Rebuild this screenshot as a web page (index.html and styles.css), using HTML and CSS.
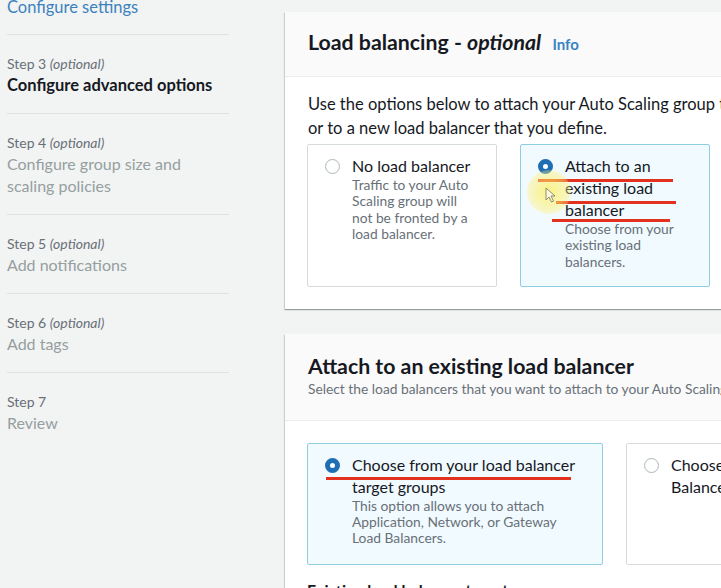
FILE: index.html
```html
<!DOCTYPE html>
<html lang="en">
<head>
<meta charset="utf-8">
<title>Load balancing</title>
<link rel="stylesheet" href="styles.css">
</head>
<body>
<div class="page">
  <nav class="steps">
    <div class="step step-first"><a class="step-link" href="#">Configure settings</a></div>
    <div class="step">
      <div class="step-label">Step 3 <i>(optional)</i></div>
      <div class="step-title is-current">Configure advanced options</div>
    </div>
    <div class="step">
      <div class="step-label">Step 4 <i>(optional)</i></div>
      <div class="step-title">Configure group size and scaling policies</div>
    </div>
    <div class="step">
      <div class="step-label">Step 5 <i>(optional)</i></div>
      <div class="step-title">Add notifications</div>
    </div>
    <div class="step">
      <div class="step-label">Step 6 <i>(optional)</i></div>
      <div class="step-title">Add tags</div>
    </div>
    <div class="step step-last">
      <div class="step-label">Step 7</div>
      <div class="step-title">Review</div>
    </div>
  </nav>

  <main class="content">
    <section class="panel">
      <header class="panel-head">
        <h2 class="panel-title">Load balancing - <i>optional</i> <a class="info" href="#">Info</a></h2>
      </header>
      <div class="panel-body">
        <p class="intro">Use the options below to attach your Auto Scaling group to an existing load balancer,<br>or to a new load balancer that you define.</p>
        <div class="tiles tiles-small">
          <div class="tile">
            <span class="radio"></span>
            <div class="tile-text">
              <div class="tile-title">No load balancer</div>
              <div class="tile-desc">Traffic to your Auto Scaling group will not be fronted by a load balancer.</div>
            </div>
          </div>
          <div class="tile is-selected">
            <span class="radio"></span>
            <div class="tile-text">
              <div class="tile-title">Attach to an existing load balancer</div>
              <div class="tile-desc">Choose from your existing load balancers.</div>
            </div>
            <span class="mark mark-a1"></span>
            <span class="mark mark-a2"></span>
            <span class="mark mark-a3"></span>
            <span class="glow"></span>
            <svg class="cursor" width="11" height="16" viewBox="0 0 11 16"><path d="M1 1 L1 13 L4 10 L6.5 15 L8.5 14 L6 9 L10 9 Z" fill="#fffbe0" stroke="#8a8a70" stroke-width="1" stroke-linejoin="round"/></svg>
          </div>
        </div>
      </div>
    </section>

    <section class="panel">
      <header class="panel-head panel-head-tall">
        <h2 class="panel-title">Attach to an existing load balancer</h2>
        <p class="panel-sub">Select the load balancers that you want to attach to your Auto Scaling group.</p>
      </header>
      <div class="panel-body panel-body-2">
        <div class="tiles tiles-wide">
          <div class="tile is-selected">
            <span class="radio"></span>
            <div class="tile-text">
              <div class="tile-title">Choose from your load balancer target groups</div>
              <div class="tile-desc">This option allows you to attach Application, Network, or Gateway Load Balancers.</div>
            </div>
            <span class="mark mark-b1"></span>
          </div>
          <div class="tile">
            <span class="radio"></span>
            <div class="tile-text">
              <div class="tile-title">Choose from Classic Load Balancers</div>
            </div>
          </div>
        </div>
        <div class="field-label">Existing load balancer target groups</div>
      </div>
    </section>
  </main>
</div>
</body>
</html>
```

FILE: styles.css
```css
html, body {
  margin: 0;
  padding: 0;
}
body {
  background: #f2f3f3;
  font-family: Lato, "Open Sans", sans-serif;
  color: #16191f;
  width: 721px;
  height: 588px;
  overflow: hidden;
}
.page {
  display: flex;
  align-items: flex-start;
}

/* ---------- side steps ---------- */
.steps {
  flex: none;
  width: 222px;
  margin: -4px 56px 0 7px;
  display: flex;
  flex-direction: column;
}
.step {
  padding: 18px 0 17px;
  border-bottom: 1px solid #dfe2e2;
}
.step-first {
  padding: 0 0 16px;
}
.step-last {
  border-bottom: none;
}
.step-link {
  display: block;
  font-size: 16.5px;
  line-height: 22px;
  color: #3d82bd;
  text-decoration: none;
}
.step-label {
  font-size: 14px;
  line-height: 21px;
  color: #687078;
}
.step-title {
  font-size: 16px;
  line-height: 22px;
  color: #959fa0;
}
.step-title.is-current {
  font-size: 16.5px;
  font-weight: 700;
  color: #16191f;
}

/* ---------- panels ---------- */
.content {
  flex: none;
  width: 780px;
  margin-top: 12px;
  display: flex;
  flex-direction: column;
  gap: 25px;
}
.panel {
  background: #fff;
  box-shadow: 0 1px 1px 0 rgba(0, 28, 36, 0.3), -1px 1px 1px 0 rgba(0, 28, 36, 0.12);
}
.panel-head {
  background: #fafafa;
  border-bottom: 1px solid #eaeded;
  padding: 17px 22px 19px 23px;
}
.panel-head-tall {
  padding: 19px 22px 22px 23px;
}
.panel-title {
  margin: 0;
  font-size: 21.3px;
  line-height: 26px;
  font-weight: 700;
  color: #16191f;
}
.info {
  font-size: 15px;
  font-weight: 700;
  color: #3a83c3;
  text-decoration: none;
  margin-left: 6px;
  font-style: normal;
}
.panel-sub {
  margin: 0;
  font-size: 13.8px;
  line-height: 19px;
  color: #687078;
}
.panel-body {
  padding: 15px 22px 22px;
}
.panel-body-2 {
  padding-top: 22px;
}
.intro {
  margin: 0 0 4px 1px;
  font-size: 16.5px;
  line-height: 24px;
  color: #16191f;
}

/* ---------- tiles ---------- */
.tiles {
  display: grid;
  gap: 23px;
}
.tiles-small {
  grid-template-columns: 190px 190px;
}
.tiles-wide {
  grid-template-columns: 296px 296px;
}
.tile {
  position: relative;
  display: flex;
  align-items: flex-start;
  gap: 12px;
  padding: 10px 16px 16px 17px;
  border: 1px solid #d5dbdb;
  border-radius: 2px;
  background: #fff;
}
.tiles-wide .tile {
  padding-bottom: 17px;
}
.tile.is-selected {
  background: #f1faff;
  border-color: #8fcde0;
}
.radio {
  flex: none;
  box-sizing: border-box;
  width: 15px;
  height: 15px;
  margin-top: 4px;
  border-radius: 50%;
  border: 1.5px solid #aab7b8;
  background: #fff;
}
.is-selected .radio {
  border: 5px solid #1d6eb3;
  background: #fff;
}
.tile-text {
  flex: 1;
  min-width: 0;
}
.tile-title {
  font-size: 16px;
  line-height: 22px;
  color: #16191f;
}
.tile-desc {
  font-size: 13.8px;
  line-height: 16.3px;
  color: #687078;
}
.field-label {
  margin-top: 14px;
  font-size: 16px;
  line-height: 22px;
  font-weight: 700;
  color: #16191f;
}

/* ---------- annotation overlays ---------- */
.mark {
  position: absolute;
  height: 3px;
  background: #e2321f;
}
.mark-a1 { left: 17px; top: 34px; width: 135px; }
.mark-a2 { left: 35px; top: 56px; width: 120px; }
.mark-a3 { left: 31px; top: 74px; width: 118px; }
.mark-b1 { left: 18px; top: 33px; width: 245px; }
.glow {
  position: absolute;
  left: 6px;
  top: 25px;
  width: 44px;
  height: 44px;
  border-radius: 50%;
  background: radial-gradient(circle, rgba(255, 240, 90, 0.75) 0%, rgba(255, 240, 110, 0.45) 55%, rgba(255, 245, 150, 0) 100%);
  pointer-events: none;
}
.cursor {
  position: absolute;
  left: 24px;
  top: 42px;
}
```
